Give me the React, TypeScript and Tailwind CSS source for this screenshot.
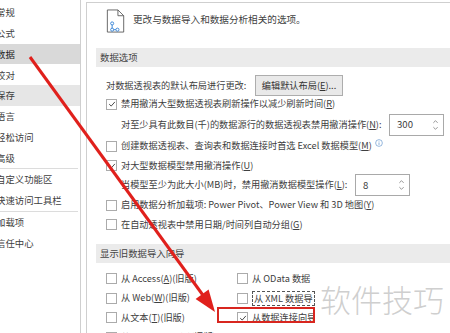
import React from 'react';

const FONT = { fontFamily: '"Noto Sans CJK SC", "Noto Sans", sans-serif' };

const navGroups: { label: string; active?: boolean; hover?: boolean }[][] = [
  [
    { label: '常规' },
    { label: '公式' },
    { label: '数据', active: true },
    { label: '校对' },
    { label: '保存', hover: true },
    { label: '语言' },
    { label: '轻松访问' },
    { label: '高级' },
  ],
  [{ label: '自定义功能区' }, { label: '快速访问工具栏' }],
  [{ label: '加载项' }, { label: '信任中心' }],
];

function Box({ checked = false }: { checked?: boolean }) {
  return (
    <span className="flex h-[11px] w-[11px] shrink-0 items-center justify-center border border-[#ababab] bg-white">
      {checked && (
        <svg viewBox="0 0 10 10" className="h-[8px] w-[8px]">
          <path d="M1.5 5.2 L4 7.6 L8.6 2.4" fill="none" stroke="#333" strokeWidth="1.1" />
        </svg>
      )}
    </span>
  );
}

function Spinner({ value, width }: { value: string; width: string }) {
  return (
    <div className={`flex h-[22px] items-center justify-between border border-[#a9a9a9] bg-white pl-[7px] pr-[4px] text-[9.6px] ${width}`}>
      <span>{value}</span>
      <svg viewBox="0 0 8 14" className="h-[12px] w-[7px]">
        <path d="M1.5 4.5 L4 2 L6.5 4.5" fill="none" stroke="#777" strokeWidth="0.9" />
        <path d="M1.5 9.5 L4 12 L6.5 9.5" fill="none" stroke="#777" strokeWidth="0.9" />
      </svg>
    </div>
  );
}

function Header({ children }: { children: React.ReactNode }) {
  return (
    <div className="ml-[9px] flex h-[19px] items-center bg-[#ebebeb] pl-[4px] text-[9.4px] text-[#444]">{children}</div>
  );
}

function CheckRow({ checked, h, children }: { checked?: boolean; h: string; children: React.ReactNode }) {
  return (
    <div className={`flex items-center gap-[4px] pl-[19px] ${h}`}>
      <Box checked={checked} />
      <span className="flex items-center whitespace-nowrap">{children}</span>
    </div>
  );
}

function Legacy({ checked, focus, children }: { checked?: boolean; focus?: boolean; children: React.ReactNode }) {
  return (
    <div className="flex h-[19.5px] items-center gap-[4px] overflow-hidden whitespace-nowrap">
      <Box checked={checked} />
      <span className={focus ? 'border border-dashed border-[#555] px-[1px] leading-[13px]' : ''}>{children}</span>
    </div>
  );
}

export default function App() {
  return (
    <div className="relative flex h-[333px] w-[450px] overflow-hidden bg-white text-[9.2px] text-[#404040]" style={FONT}>
      <nav className="w-[81px] shrink-0 border-r border-[#cfcfcf] pt-[2px] text-[9.4px]">
        {navGroups.map((group, gi) => (
          <div key={gi} className={gi > 0 ? 'mr-[2px] border-t border-[#dcdcdc]' : ''}>
            {group.map((item) => (
              <div
                key={item.label}
                className={`flex h-[20.75px] items-center whitespace-nowrap ${
                  item.active ? 'bg-[#d9d9d9] text-[#222]' : item.hover ? 'bg-[#e6e6e6]' : ''
                }`}
              >
                <span className="-ml-[4px]">{item.label}</span>
              </div>
            ))}
          </div>
        ))}
      </nav>

      <main className="ml-[5px] mt-[2px] flex-1 border-l border-t border-[#cfcfcf] pt-[1px]">
        <div className="flex h-[34px] items-center gap-[6px] pl-[18px]">
          <svg viewBox="0 0 22 26" className="h-[25px] w-[22px]">
            <path d="M2 1 H13 L19 7 V24 H2 Z" fill="none" stroke="#555" strokeWidth="0.9" />
            <path d="M13 1 V7 H19" fill="none" stroke="#555" strokeWidth="0.9" />
            <circle cx="7" cy="15" r="1.6" fill="none" stroke="#2b7cd3" strokeWidth="0.9" />
            <circle cx="7" cy="21.5" r="1.6" fill="none" stroke="#2b7cd3" strokeWidth="0.9" />
            <circle cx="12.5" cy="21.5" r="1.6" fill="none" stroke="#2b7cd3" strokeWidth="0.9" />
            <path d="M7 16.6 V19.9 M8.6 21.5 H10.9" stroke="#2b7cd3" strokeWidth="0.9" />
          </svg>
          <span className="-mt-[4px] text-[9.6px]">更改与数据导入和数据分析相关的选项。</span>
        </div>

        <div className="mt-[10px]">
          <Header>数据选项</Header>
        </div>

        <div className="mt-[8px] flex h-[21px] items-center pl-[19px]">
          <span className="w-[149px] whitespace-nowrap">对数据透视表的默认布局进行更改:</span>
          <button className="flex h-[21px] w-[88px] items-center justify-center border border-[#adadad] bg-[#e9e9e9] text-[#333]">
            编辑默认布局(<u>E</u>)...
          </button>
        </div>

        <CheckRow checked h="h-[16px]">
          禁用撤消大型数据透视表刷新操作以减少刷新时间(<u>R</u>)
        </CheckRow>

        <div className="mt-[1px] flex h-[23px] items-center pl-[34px]">
          <span className="w-[268px] whitespace-nowrap">
            对至少具有此数目(千)的数据源行的数据透视表禁用撤消操作(<u>N</u>):
          </span>
          <Spinner value="300" width="w-[55px]" />
        </div>

        <CheckRow h="h-[20px]">
          <span>
            创建数据透视表、查询表和数据连接时首选 Excel 数据模型(<u>M</u>)
          </span>
          <svg viewBox="0 0 10 10" className="-mt-[5px] ml-[3px] h-[8px] w-[8px]">
            <circle cx="5" cy="5" r="4.2" fill="none" stroke="#5b8fc9" strokeWidth="0.8" />
            <path d="M5 4.3 V7.4 M5 2.6 V3.3" stroke="#5b8fc9" strokeWidth="0.9" />
          </svg>
        </CheckRow>

        <CheckRow checked h="h-[19px]">
          对大型数据模型禁用撤消操作(<u>U</u>)
        </CheckRow>

        <div className="flex h-[20px] items-center pl-[34px]">
          <span className="w-[234px] whitespace-nowrap">
            当模型至少为此大小(MB)时，禁用撤消数据模型操作(<u>L</u>):
          </span>
          <Spinner value="8" width="w-[55px]" />
        </div>

        <CheckRow h="h-[20px]">
          启用数据分析加载项: Power Pivot、Power View 和 3D 地图(<u>Y</u>)
        </CheckRow>

        <CheckRow h="h-[19px]">
          在自动透视表中禁用日期/时间列自动分组(<u>G</u>)
        </CheckRow>

        <div className="mt-[10px]">
          <Header>显示旧数据导入向导</Header>
        </div>

        <div className="mt-[6px] grid grid-cols-[131px_78px] pl-[19px]">
          <Legacy>
            从 Access(<u>A</u>)(旧版)
          </Legacy>
          <Legacy>从 OData 数据</Legacy>
          <Legacy>
            从 Web(<u>W</u>)(旧版)
          </Legacy>
          <Legacy focus>从 XML 数据导</Legacy>
          <Legacy>
            从文本(<u>T</u>)(旧版)
          </Legacy>
          <Legacy checked>从数据连接向导</Legacy>
          <Legacy>
            从 SQL Server(<u>S</u>)(旧版)
          </Legacy>
          <div />
        </div>
      </main>

      <div className="pointer-events-none absolute left-[217px] top-[307px] h-[16px] w-[98px] border-2 border-[#d8261f]" />

      <svg className="pointer-events-none absolute left-0 top-0" width="450" height="333" viewBox="0 0 450 333">
        <line x1="30" y1="57" x2="205" y2="298" stroke="#e0201c" strokeWidth="3" />
        <polygon points="215,312 195.6,298.9 208.6,289.5" fill="#e0201c" />
      </svg>

      <div className="pointer-events-none absolute left-[320px] top-[280px] text-[31px] font-light leading-[38px] text-[#c9c9c9]/90">
        软件技巧
      </div>
    </div>
  );
}
